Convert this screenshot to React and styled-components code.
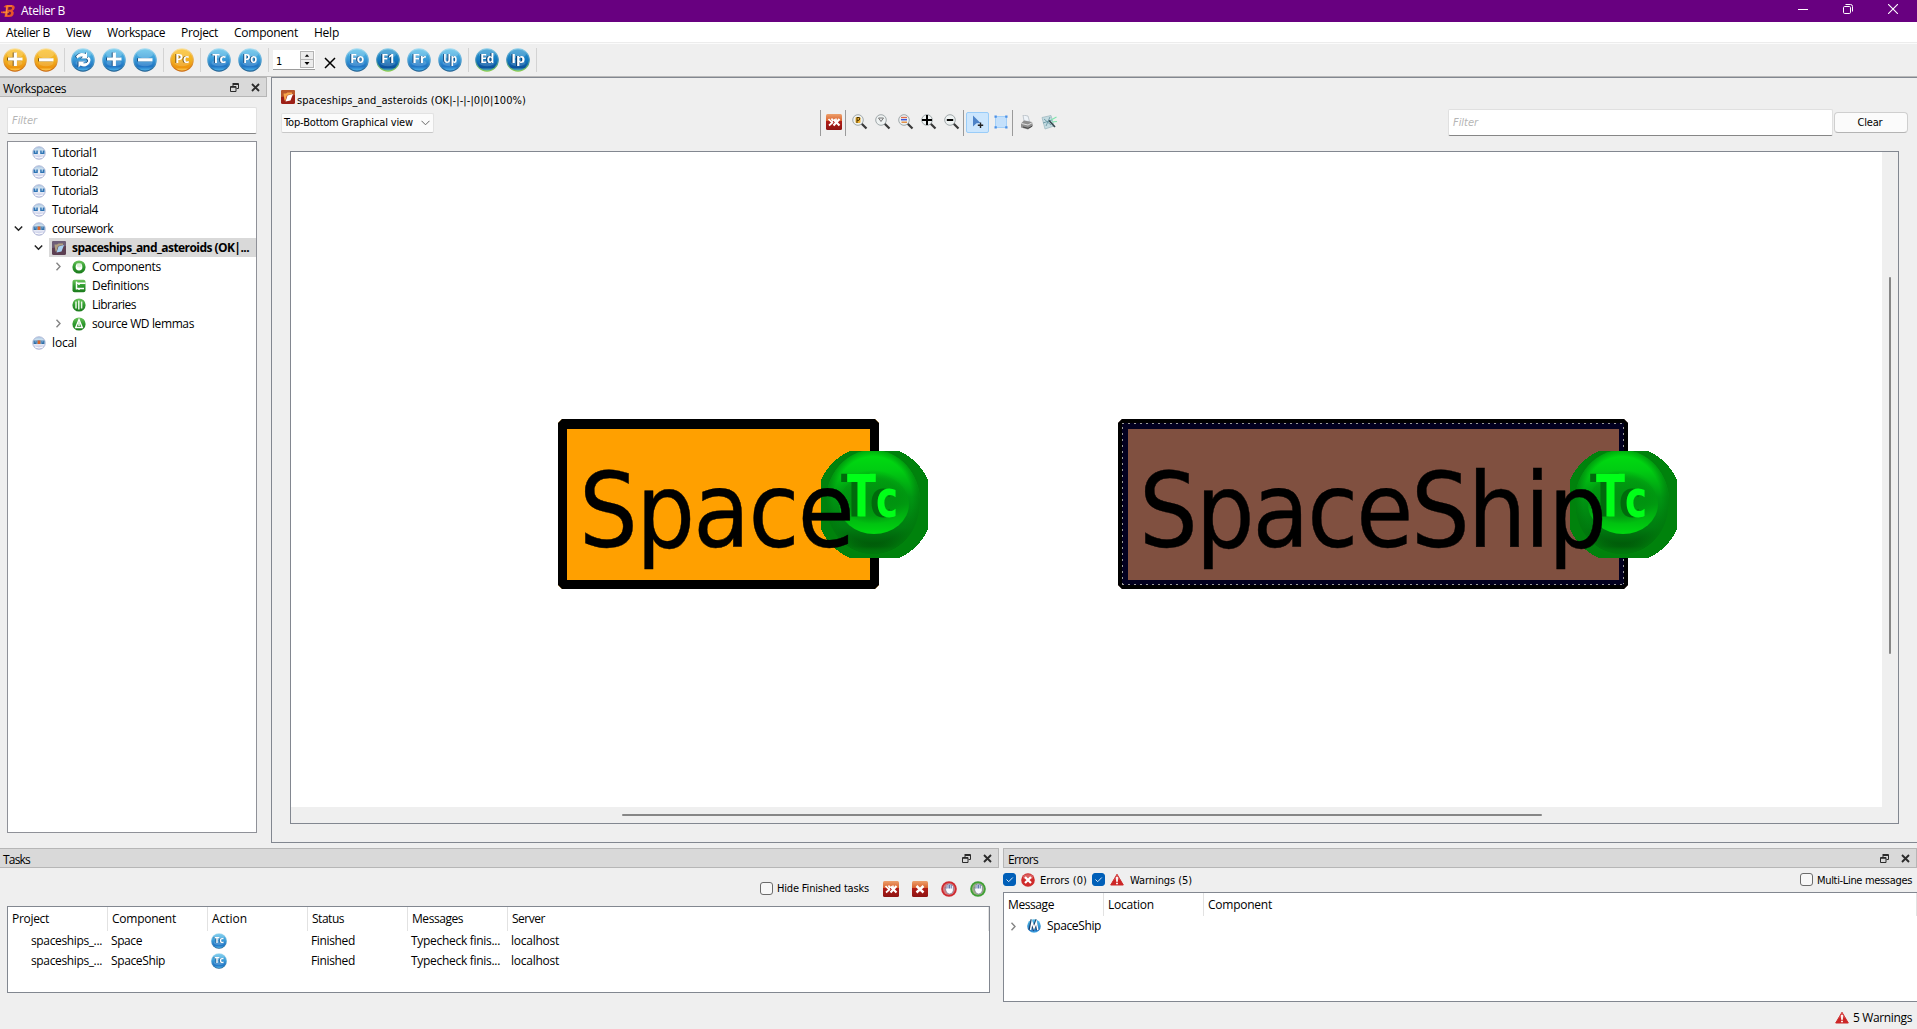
import React, { useLayoutEffect, useRef, useState } from 'react';
import styled, { createGlobalStyle, css } from 'styled-components';

const ui = '"Open Sans", "Noto Sans", sans-serif';
const tahoma = '"DejaVu Sans Condensed", "DejaVu Sans", sans-serif';

const Global = createGlobalStyle`
  * { box-sizing: border-box; }
  body { margin: 0; overflow: hidden; background: #efefef; }
  svg { display: block; flex: none; }
`;

/* ---------- text ---------- */
const TextSpan = styled.span`
  display: inline-block;
  flex: none;
  white-space: pre;
  font-family: ${(p) => (p.$tahoma ? tahoma : ui)};
  font-stretch: ${(p) => (p.$tahoma ? 'condensed' : 'normal')};
  font-size: ${(p) => p.$size || (p.$tahoma ? 11 : 12)}px;
  font-weight: ${(p) => (p.$bold ? 700 : 400)};
  font-style: ${(p) => (p.$italic ? 'italic' : 'normal')};
  line-height: ${(p) => p.$line || '16px'};
  color: ${(p) => p.$color || '#000'};
  -webkit-text-stroke: ${(p) => p.$stroke || 0}px #000;
`;

function Label({ width, children, ...rest }) {
  const ref = useRef(null);
  const [spacing, setSpacing] = useState(0);
  useLayoutEffect(() => {
    const natural = ref.current.getBoundingClientRect().width;
    if (width) setSpacing((width - natural) / String(children).length);
  }, [width, children]);
  return (
    <TextSpan ref={ref} style={{ letterSpacing: `${spacing}px` }} {...rest}>
      {children}
    </TextSpan>
  );
}

/* ---------- window chrome ---------- */
const Window = styled.div`
  width: 1917px;
  height: 1029px;
  display: flex;
  flex-direction: column;
  background: #efefef;
  overflow: hidden;
`;
const TitleBar = styled.header`
  height: 22px;
  flex: none;
  display: flex;
  align-items: center;
  justify-content: space-between;
  background: #680080;
  padding-left: 1px;
`;
const TitleLeft = styled.div`
  display: flex;
  align-items: center;
  gap: 5px;
  height: 22px;
  padding-bottom: 1px;
`;
const WindowButtons = styled.div`
  display: flex;
  align-items: center;
  gap: 35px;
  padding: 0 19px 4px 0;
`;
const MenuBar = styled.nav`
  height: 21px;
  flex: none;
  display: flex;
  align-items: center;
  gap: 16px;
  padding: 2px 0 0 6px;
  background: #fff;
  border-bottom: 1px solid #ececec;
`;
const Toolbar = styled.div`
  height: 34px;
  flex: none;
  display: flex;
  align-items: center;
  border-top: 1px solid #fbfbfb;
  border-bottom: 1px solid #b9b9b9;
`;
const ToolCell = styled.div`
  width: 31px;
  padding-left: 3px;
  flex: none;
`;
const ToolSep = styled.div`
  width: 6px;
  height: 24px;
  flex: none;
  background: linear-gradient(#d3d3d3, #d3d3d3) 2px 0 / 1px 100% no-repeat;
`;
const Spin = styled.div`
  width: 42px;
  height: 20px;
  margin: 0 0 0 1px;
  padding: 1px 1px 1px 3px;
  display: flex;
  align-items: center;
  justify-content: space-between;
  background: #fff;
  border-bottom: 1px solid #9c9c9c;
`;
const SpinValue = styled.div`
  padding-top: 2px;
`;
const SpinButtons = styled.div`
  display: grid;
  grid-template-rows: 8px 7px;
  width: 14px;
  height: 17px;
  border: 1px solid #b4b4b4;
  background: #ececec;
  > svg:first-child { border-bottom: 1px solid #b4b4b4; }
`;
const Cross = styled.div`
  width: 27px;
  padding: 5px 0 0 9px;
`;

/* ---------- docks ---------- */
const Upper = styled.div`
  height: 771px;
  flex: none;
  display: flex;
`;
const Lower = styled.div`
  height: 160px;
  flex: none;
  display: flex;
  gap: 4px;
`;
const Dock = styled.section`
  width: ${(p) => p.$width}px;
  flex: none;
  display: flex;
  flex-direction: column;
`;
const DockTitle = styled.div`
  height: 20px;
  flex: none;
  display: flex;
  align-items: center;
  justify-content: space-between;
  padding: 0 6px 0 ${(p) => p.$inset || 3}px;
  background: #d9d9d9;
  border: 1px solid #b6b6b6;
  border-left-width: ${(p) => (p.$inset ? 1 : 0)}px;
`;
const DockName = styled.div`
  padding-top: 2px;
`;
const DockButtons = styled.div`
  display: flex;
  align-items: center;
  gap: 12px;
`;
const FilterBox = styled.div`
  width: ${(p) => p.$width}px;
  height: 27px;
  flex: none;
  margin: ${(p) => p.$margin || 0};
  padding: 2px 4px;
  background: #fff;
  border: 1px solid #e0e0e0;
  border-bottom: 1px solid #868686;
  border-radius: 2px;
`;
const Tree = styled.div`
  width: 250px;
  height: 692px;
  margin: 7px 0 0 7px;
  padding-top: 1px;
  background: #fff;
  border: 1px solid #8f9198;
`;
const TreeRow = styled.div`
  height: 19px;
  display: flex;
  align-items: center;
  padding-left: ${(p) => p.$level * 20 + 4}px;
`;
const Twisty = styled.div`
  width: 17px;
  height: 16px;
  display: flex;
  align-items: center;
  padding-left: 2px;
  flex: none;
`;
const TreeItem = styled.div`
  height: 19px;
  flex: 1;
  display: flex;
  align-items: center;
  gap: 6px;
  padding-left: 3px;
  ${(p) => p.$selected && css`background: #d9d9d9;`}
`;

/* ---------- main view ---------- */
const Main = styled.main`
  width: 1646px;
  height: 766px;
  margin-left: 4px;
  flex: none;
  display: flex;
  flex-direction: column;
  border: 1px solid #828790;
  border-width: 1px 0 1px 1px;
`;
const PathRow = styled.div`
  display: flex;
  align-items: flex-start;
  gap: 2px;
  height: 20px;
  margin: 12px 0 0 9px;
`;
const ViewBar = styled.div`
  height: 28px;
  flex: none;
  display: flex;
  align-items: center;
  margin: -1px 0 0 9px;
  padding-bottom: 1px;
`;
const Combo = styled.div`
  width: 153px;
  height: 20px;
  padding: 1px 3px 0 2px;
  display: flex;
  align-items: center;
  justify-content: space-between;
  background: #fbfbfb;
  border: 1px solid #e2e2e2;
  border-bottom-color: #c8c8c8;
  border-radius: 2px;
`;
const ViewTools = styled.div`
  display: flex;
  align-items: center;
  margin-left: 386px;
  height: 26px;
`;
const ViewSep = styled.div`
  width: ${(p) => p.$width}px;
  height: 26px;
  flex: none;
  border-left: 1px solid #9a9a9a;
`;
const ViewTool = styled.div`
  width: 23px;
  height: 21px;
  margin-bottom: 1px;
  display: flex;
  align-items: center;
  justify-content: center;
  ${(p) => p.$active && css`
    background: #cce6fd;
    border: 1px solid #99ccf8;
    border-radius: 2px;
  `}
`;
const ViewFilter = styled.div`
  display: flex;
  align-items: center;
  gap: 1px;
  margin-left: 387px;
`;
const ClearButton = styled.button`
  width: 74px;
  height: 21px;
  padding: 1px 2px 0 0;
  border: 1px solid #cfcfcf;
  border-bottom-color: #b4b4b4;
  border-radius: 4px;
  background: #fbfbfb;
  display: flex;
  align-items: center;
  justify-content: center;
`;
const CanvasFrame = styled.div`
  width: 1609px;
  height: 673px;
  margin: 14px 0 0 18px;
  display: grid;
  grid-template-columns: 1fr 16px;
  grid-template-rows: 1fr 16px;
  border: 1px solid #828790;
`;
const Canvas = styled.div`
  position: relative;
  background: #fff;
`;
const VTrack = styled.div`
  padding: 125px 0 0 7px;
  &::after { content: ''; display: block; width: 2px; height: 377px; background: #868686; border-radius: 1px; }
`;
const HTrack = styled.div`
  padding: 7px 0 0 331px;
  &::after { content: ''; display: block; width: 920px; height: 2px; background: #868686; border-radius: 1px; }
`;
const Node = styled.div`
  position: absolute;
  left: ${(p) => p.$x}px;
  top: 267px;
  width: ${(p) => p.$width}px;
  height: 170px;
  border: 9px solid #000;
  border-top-width: 10px;
  border-left-width: ${(p) => p.$edge || 9}px;
  background: ${(p) => p.$fill};
  clip-path: polygon(4px 0, calc(100% - 4px) 0, 100% 4px, 100% calc(100% - 4px), calc(100% - 4px) 100%, 4px 100%, 0 calc(100% - 4px), 0 4px);
`;
const Selection = styled.div`
  position: absolute;
  left: ${(p) => p.$x}px;
  top: 271px;
  width: ${(p) => p.$width}px;
  height: 162px;
  border: 5px solid #02001f;
  border-width: 6px 5px 5px 6px;
  &::before {
    content: '';
    position: absolute;
    inset: -6px -5px -5px -6px;
    background:
      repeating-linear-gradient(90deg, #9a9a9a 0 2px, #02001f 2px 6px) 0 0 / 100% 1px no-repeat,
      repeating-linear-gradient(90deg, #9a9a9a 0 2px, #02001f 2px 6px) 0 100% / 100% 1px no-repeat,
      repeating-linear-gradient(0deg, #9a9a9a 0 2px, #02001f 2px 6px) 0 0 / 1px 100% no-repeat,
      repeating-linear-gradient(0deg, #9a9a9a 0 2px, #02001f 2px 6px) 100% 0 / 1px 100% no-repeat;
  }
`;
const Badge = styled.div`
  position: absolute;
  left: ${(p) => p.$x}px;
  top: 299px;
`;
const NodeName = styled.div`
  position: absolute;
  left: ${(p) => p.$x}px;
  top: 298px;
`;

/* ---------- tables ---------- */
const TaskTools = styled.div`
  height: 38px;
  flex: none;
  display: flex;
  align-items: center;
  justify-content: flex-end;
  padding: 3px 13px 0 0;
`;
const ErrorTools = styled.div`
  height: 24px;
  flex: none;
  display: flex;
  align-items: center;
  padding-bottom: 1px;
`;
const Check = styled.div`
  width: 13px;
  height: 13px;
  flex: none;
  margin: ${(p) => p.$margin || 0};
  border-radius: 3px;
  border: 1px solid ${(p) => (p.$on ? '#005fb8' : '#6b6b6b')};
  background: ${(p) => (p.$on ? '#005fb8' : '#f7f7f7')};
`;
const IconBox = styled.div`
  margin: ${(p) => p.$margin};
  flex: none;
`;
const Spacer = styled.div`
  flex: 1;
`;
const Table = styled.div`
  width: ${(p) => p.$width}px;
  height: ${(p) => p.$height}px;
  margin-left: ${(p) => p.$left || 0}px;
  background: #fff;
  border: 1px solid #828790;
  overflow: hidden;
`;
const HeadRow = styled.div`
  display: flex;
  height: ${(p) => p.$height || 24}px;
  justify-content: flex-start;
`;
const HeadCell = styled.div`
  width: ${(p) => p.$width || 100}px;
  flex: none;
  display: flex;
  align-items: center;
  padding-left: 4px;
  border-right: 1px solid #e2e2e2;
`;
const BodyRow = styled.div`
  display: flex;
  height: 20px;
  align-items: center;
`;
const Cell = styled.div`
  width: ${(p) => p.$width || 100}px;
  flex: none;
  padding-left: ${(p) => (p.$pad === undefined ? 3 : p.$pad)}px;
  display: flex;
  align-items: center;
`;
const StatusBar = styled.footer`
  flex: 1;
  display: flex;
  align-items: center;
  justify-content: flex-end;
  gap: 4px;
  padding: 0 5px 1px 0;
`;

/* ---------- icons ---------- */
const HiddenDefs = styled.svg`
  position: absolute;
`;
const EngravedText = styled.text`
  font-family: "Open Sans", sans-serif;
  font-weight: 700;
  font-size: 12.5px;
  fill: #fff;
  filter: drop-shadow(-0.8px 0.5px 0 ${(p) => p.$shade});
`;
const EngravedGroup = styled.g`
  filter: drop-shadow(-0.8px 0.8px 0 ${(p) => p.$shade});
`;
const BadgeText = styled.g`
  font-family: "DejaVu Sans", sans-serif;
  font-weight: 700;
  fill: #00ff18;
  filter: drop-shadow(-6px 0 0 #006a0c);
`;

function Defs() {
  return (
    <HiddenDefs width="0" height="0">
      <defs>
        <linearGradient id="blue" x1="0" y1="0" x2="0" y2="1">
          <stop offset="0" stopColor="#58bfe9" /><stop offset=".45" stopColor="#3a9cd8" />
          <stop offset=".8" stopColor="#1f74c4" /><stop offset="1" stopColor="#4fb4ea" />
        </linearGradient>
        <linearGradient id="deep" x1="0" y1="0" x2="0" y2="1">
          <stop offset="0" stopColor="#2f97d0" /><stop offset=".5" stopColor="#1279bf" />
          <stop offset=".85" stopColor="#0a4f9c" /><stop offset="1" stopColor="#5cc0c0" />
        </linearGradient>
        <linearGradient id="gold" x1="0" y1="0" x2="0" y2="1">
          <stop offset="0" stopColor="#fbbf24" /><stop offset=".5" stopColor="#f0b022" />
          <stop offset=".85" stopColor="#ee950c" /><stop offset="1" stopColor="#ffd05a" />
        </linearGradient>
        <linearGradient id="rimBlue" x1="0" y1="0" x2="0" y2="1">
          <stop offset="0" stopColor="#a9def2" /><stop offset=".5" stopColor="#57a8d8" /><stop offset="1" stopColor="#1d5c8e" />
        </linearGradient>
        <linearGradient id="rimDeep" x1="0" y1="0" x2="0" y2="1">
          <stop offset="0" stopColor="#8fd0ea" /><stop offset=".5" stopColor="#2d84b8" /><stop offset="1" stopColor="#8fd044" />
        </linearGradient>
        <linearGradient id="rimGold" x1="0" y1="0" x2="0" y2="1">
          <stop offset="0" stopColor="#fbe3a0" /><stop offset=".5" stopColor="#e9a73c" /><stop offset="1" stopColor="#c9660c" />
        </linearGradient>
        <linearGradient id="redBox" x1="0" y1="0" x2="0" y2="1">
          <stop offset="0" stopColor="#eda06b" /><stop offset=".42" stopColor="#d9622f" />
          <stop offset=".46" stopColor="#b01d17" /><stop offset="1" stopColor="#8e1413" />
        </linearGradient>
        <linearGradient id="greenDot" x1="0" y1="0" x2="0" y2="1">
          <stop offset="0" stopColor="#6cc45c" /><stop offset=".5" stopColor="#2e9a2e" /><stop offset="1" stopColor="#1c7a1c" />
        </linearGradient>
        <linearGradient id="face" x1="0" y1="0" x2="0" y2="1">
          <stop offset="0" stopColor="#a8c8e2" /><stop offset=".5" stopColor="#f2f5fa" /><stop offset="1" stopColor="#b8bce0" />
        </linearGradient>
        <linearGradient id="badgeBase" x1="0" y1="0" x2="0" y2="1">
          <stop offset="0" stopColor="#00e010" /><stop offset=".2" stopColor="#00cc12" />
          <stop offset=".45" stopColor="#009612" /><stop offset=".75" stopColor="#007c10" />
          <stop offset=".93" stopColor="#005608" /><stop offset="1" stopColor="#007a0c" />
        </linearGradient>
        <linearGradient id="badgeGlow" x1="0" y1="0" x2="0" y2="1">
          <stop offset="0" stopColor="#00960f" stopOpacity="0" /><stop offset=".5" stopColor="#009a10" />
          <stop offset="1" stopColor="#00d810" />
        </linearGradient>
        <radialGradient id="badgeCore">
          <stop offset="0" stopColor="#00900f" stopOpacity=".8" /><stop offset=".7" stopColor="#00900f" stopOpacity=".6" />
          <stop offset="1" stopColor="#00900f" stopOpacity="0" />
        </radialGradient>
        <radialGradient id="badgeEdge" cx=".5" cy=".48" r=".52">
          <stop offset=".8" stopColor="#007a0c" stopOpacity="0" /><stop offset="1" stopColor="#007a0c" stopOpacity=".9" />
        </radialGradient>
      </defs>
    </HiddenDefs>
  );
}

const shades = { blue: '#1c4f80', deep: '#0b3766', gold: '#7a5410' };

function Ball({ tone = 'blue', text, size = 24, children }) {
  const rim = { blue: 'rimBlue', deep: 'rimDeep', gold: 'rimGold' }[tone];
  return (
    <svg width={size} height={size} viewBox="0 0 24 24">
      <circle cx="12" cy="12" r="11.8" fill={`url(#${rim})`} />
      <circle cx="12" cy="12" r="10.6" fill={`url(#${tone})`} />
      <ellipse cx="12" cy="6" rx="8" ry="4.4" fill="#fff" opacity=".2" />
      <ellipse cx="12" cy="15" rx="7.5" ry="3.2" fill="#fff" opacity=".16" />
      {text && (
        <EngravedText $shade={shades[tone]} x="5.2" y="15" textLength="14" lengthAdjust="spacingAndGlyphs">{text}</EngravedText>
      )}
      {children && <EngravedGroup $shade={shades[tone]}>{children}</EngravedGroup>}
    </svg>
  );
}
const Plus = () => <path d="M12.300 4.500V18M5 11H19.500" stroke="#fff" strokeWidth="3.200" fill="none" />;
const Minus = () => <path d="M5 11.800H19.500" stroke="#fff" strokeWidth="3.200" fill="none" />;
const Refresh = () => (
  <g fill="#fff">
    <path d="M5 8.500Q9 3 14.500 6L16 4V10.500H10L12 8.800Q8.500 7.500 6.500 10.500Z" />
    <path d="M19 14Q15.500 20.500 9.500 17.500L7.500 19.500V13.500H14L11.800 15Q15 16.200 17 13.500Q17.500 11.500 15.500 10.800L17.500 8.800Q20.500 10.500 19 14Z" />
  </g>
);

const Logo = () => (
  <svg width="15" height="16" viewBox="0 0 15 16">
    <path d="M5 2H11Q14.500 2.500 13.500 5.500Q13 7.200 11.500 7.700Q13.500 9 12.500 11.500Q11.500 14 8 14H3.500L4 10.500L0 10V8.500H4.500L5 4.500L2.500 4Z" fill="#e8542c" />
    <path d="M7.500 4H10Q11.500 4.200 11 5.500Q10.500 6.700 9 6.700H7ZM7 8.700H9Q10.800 9 10 10.700Q9.300 12 7.800 12H6.500Z" fill="#6e1450" />
    <path d="M6 3L5 13M2 9.200H8M6 3H11" stroke="#ff9a3c" strokeWidth=".9" fill="none" />
  </svg>
);
const Restore = () => (
  <svg width="9" height="9" viewBox="0 0 9 9">
    <path d="M3 .5H8.500V5.500H6.500M3 1.500H8.500M3 0V3" stroke="#2b2b2b" fill="none" />
    <path d="M.5 3.500H6V8.500H.5ZM.5 4.300H6" stroke="#2b2b2b" fill="none" />
  </svg>
);
const Close = () => (
  <svg width="9" height="9" viewBox="0 0 9 9"><path d="M1 1L8 8M8 1L1 8" stroke="#2b2b2b" strokeWidth="1.9" /></svg>
);
const Chevron = ({ open }) => (
  <svg width="9" height="9" viewBox="0 0 9 9">
    {open ? <path d="M.8 2.500L4.500 6.200L8.200 2.500" stroke="#222" strokeWidth="1.5" fill="none" />
      : <path d="M2.500 .8L6 4.500L2.500 8.200" stroke="#858585" strokeWidth="1.4" fill="none" />}
  </svg>
);
const FaceIcon = ({ on }) => (
  <svg width="14" height="14" viewBox="0 0 14 14">
    <circle cx="7" cy="7" r="6.300" fill="url(#face)" stroke="#aab0d2" strokeWidth=".8" />
    {on ? (
      <g><path d="M1.500 4.500H12.500V8H1.500Z" fill="#2f6ea8" /><rect x="5.400" y="4.500" width="3.200" height="3.500" fill="#d8642a" />
        <path d="M3.200 4.500V6.500M10.800 4.500V6.500M5 4.500V8M9 4.500V8" stroke="#a9cbe6" strokeWidth=".7" /></g>
    ) : (
      <g fill="#2e74b4"><path d="M1.500 4.500H5.800V8H1.500ZM8.200 4.500H12.500V8H8.200Z" />
        <path d="M3.800 4V6.700M10.200 4V6.700" stroke="#d6e6f4" strokeWidth="1" /></g>
    )}
    <path d="M3 11Q7 13 11 11" stroke="#fff" fill="none" />
  </svg>
);
const FolderIcon = ({ muted }) => (
  <svg width="14" height="14" viewBox="0 0 14 14">
    <rect width="14" height="14" rx="1.500" fill={muted ? '#5c3f52' : '#9c1f16'} />
    <path d="M0 1.500Q0 0 1.500 0H12.500Q14 0 14 1.500V5L0 7Z" fill={muted ? '#6e5f78' : '#b8562a'} />
    <path d="M2.500 3.500H5L6.500 2.500H11V4L6 5L4.500 10.500H3.500Z" fill={muted ? '#b0a080' : '#f7a64a'} />
    <path d="M6.500 5.500L12 4L9.500 10.500L4.500 11.500Z" fill={muted ? '#a8d0f0' : '#fff'} />
  </svg>
);
const GreenIcon = ({ kind }) => (
  <svg width="14" height="14" viewBox="0 0 14 14">
    {kind === 'definitions' ? <rect x=".5" y=".8" width="13" height="12.500" rx="2" fill="url(#greenDot)" />
      : <circle cx="7" cy="7" r="6.600" fill="url(#greenDot)" />}
    {kind === 'components' && <g><circle cx="7" cy="7" r="3.400" fill="#fff" /><path d="M4.500 3.400H9.500V6.500Q7 8.500 5 6.500Z" fill="#d9f2d4" /></g>}
    {kind === 'definitions' && <path d="M4.500 2.500V10.500M4.500 4.200H13.500M4.500 9.500H12M7 4.200V6M7 9.500V11" stroke="#fff" strokeWidth="1.500" fill="none" />}
    {kind === 'libraries' && <path d="M4 3.500V10.500M6.800 2.500V11.500M9.600 3.500V10.500" stroke="#eaf8e6" strokeWidth="1.500" />}
    {kind === 'lemmas' && <path d="M7 2.500L10.300 10.500H3.700ZM7 5.500V9" stroke="#fff" strokeWidth="1.400" fill="none" />}
  </svg>
);
const KillIcon = ({ double }) => (
  <svg width="16" height="16" viewBox="0 0 16 16">
    <rect width="16" height="16" rx="1.500" fill="url(#redBox)" />
    {double ? (
      <g stroke="#fff" fill="none">
        <path d="M7.500 5.500L13.500 11.500M13.500 5L7.500 11.500" strokeWidth="2.200" />
        <path d="M2.500 5L6 8.500M7 8L3 11.500M5.500 4.500L7 7M10 4.500V7" strokeWidth="1.700" />
      </g>
    ) : <path d="M4.500 5L11.500 11.500M11.500 5L4.500 11.500" stroke="#fff" strokeWidth="2.400" />}
  </svg>
);
const HandIcon = ({ color }) => (
  <svg width="16" height="16" viewBox="0 0 16 16">
    <circle cx="8" cy="8" r="7.800" fill={color} />
    <circle cx="8" cy="8" r="6" fill="#d9b8b8" opacity=".6" />
    <path d="M4 6.500L5.300 7.500V4.500Q6 3 7 3.500Q8.500 2.200 9.500 3.500Q11 3 11.300 4.500L12.300 5.500V9.500Q11.800 13 8.500 13Q6 13 5 10Z" fill="#fbfbff" stroke="#666c8c" strokeWidth=".6" />
    <path d="M7 4V7.500M8.600 3.500V7.500M10.200 4V7.500" stroke="#3f5b9c" strokeWidth=".9" />
  </svg>
);
const ErrorIcon = () => (
  <svg width="14" height="14" viewBox="0 0 14 14">
    <circle cx="7" cy="7" r="6.800" fill="#cf2b2b" /><ellipse cx="7" cy="4" rx="5" ry="2.800" fill="#fff" opacity=".25" />
    <path d="M4 4L10 10M10 4L4 10" stroke="#fff" strokeWidth="2.200" />
  </svg>
);
const WarnIcon = () => (
  <svg width="14" height="14" viewBox="0 0 14 14">
    <path d="M7 1.300L13.300 12H.7Z" fill="#cc2626" stroke="#cc2626" strokeLinejoin="round" />
    <path d="M7 1.500L10 6.500H4Z" fill="#e88080" opacity=".6" />
    <path d="M7 4V8.700M7 9.800V11.300" stroke="#fff" strokeWidth="1.800" />
  </svg>
);
const MachineIcon = () => (
  <svg width="14" height="14" viewBox="0 0 14 14">
    <circle cx="7" cy="7" r="6.800" fill="url(#blue)" />
    <path d="M2.800 11L4.300 3.500L6.500 9L8.700 3.500L10.300 11" stroke="#1c3f66" strokeWidth="2.600" fill="none" />
    <path d="M3.500 11L5 3.200L7 9L9.300 3.200L10.800 11" stroke="#fff" strokeWidth="1.500" fill="none" />
  </svg>
);
const Lens = ({ kind }) => (
  <svg width="16" height="16" viewBox="0 0 16 16">
    <path d="M9.500 9.500L14.500 14.500" stroke="#3a3a3a" strokeWidth="2.200" />
    <circle cx="6" cy="6" r="5.300" fill="#eef2f2" stroke="#a0a8aa" />
    {kind === 'project' && <g><rect x="3.500" y="3" width="5" height="6" rx="1" fill="#f0b436" /><path d="M5 9V3.500H7.300Q8.500 5 7 6.300H5" stroke="#4b3200" fill="none" /></g>}
    {kind === 'fit' && <path d="M3.500 4H8.500L6 7.500Z" fill="#e8ebec" stroke="#777" />}
    {kind === 'select' && <g><path d="M3 3.500H9" stroke="#e06a4c" strokeWidth="1.300" /><path d="M3 5.700H9" stroke="#4057d8" strokeWidth="1.500" /><path d="M3.500 8.200H9" stroke="#e0812c" strokeWidth="1.300" /></g>}
    {kind === 'in' && <path d="M6 1V11M1 6H11" stroke="#000" strokeWidth="2" />}
    {kind === 'out' && <path d="M2.800 6H9.200" stroke="#000" strokeWidth="2" />}
  </svg>
);
const Pointer = () => (
  <svg width="14" height="14" viewBox="0 0 14 14">
    <path d="M2 .5L9.500 8L5.500 8.200L2 11.500Z" fill="#4e83c8" />
    <path d="M9.500 7.500V13M6.800 10.200H12.200" stroke="#222" strokeWidth="1.400" />
  </svg>
);
const Marquee = () => (
  <svg width="14" height="14" viewBox="0 0 14 14">
    <rect x="1.500" y="1.500" width="11" height="11" fill="#c4e0fb" stroke="#a3cff7" />
    <path d="M.5 .5H2.800V2.800H.5ZM11.200 .5H13.500V2.800H11.200ZM.5 11.200H2.800V13.500H.5ZM11.200 11.200H13.500V13.500H11.200Z" fill="#4a90e8" />
  </svg>
);
const Printer = () => (
  <svg width="14" height="15" viewBox="0 0 14 15">
    <path d="M3 0L8 1L9.500 6.500L4 6Z" fill="#eef3f8" stroke="#a5adb5" strokeWidth=".6" />
    <path d="M1 8.500L4 5.500L12 7L13 11L8 14.500L1 12.500Z" fill="#8e8e8e" />
    <path d="M1.500 8.500L8 10L12.500 7.500" stroke="#e2e2e2" fill="none" /><path d="M3 12L8 13.300L12 11.300" stroke="#444" fill="none" />
  </svg>
);
const Snapshot = () => (
  <svg width="17" height="16" viewBox="0 0 17 16">
    <path d="M1 3.500L10 1.500L13 12L4 15Z" fill="#c4dbe1" stroke="#9ab4bd" strokeWidth=".7" />
    <path d="M3 5L10 11M5 12L9 3M2 9L11 6" stroke="#6a97a4" strokeWidth=".9" />
    <path d="M8 6.500L14 13" stroke="#35474d" strokeWidth="1.600" /><path d="M10 6L15.500 3M11 8L16 7.500" stroke="#7fe6ae" strokeWidth="1.200" />
  </svg>
);
function TcBadge() {
  return (
    <svg width="107" height="107" viewBox="0 0 107 107">
      <circle cx="53.5" cy="53.5" r="59" fill="#00820c" shapeRendering="crispEdges" />
      <ellipse cx="52" cy="51" rx="47" ry="52" fill="url(#badgeBase)" />
      <ellipse cx="52" cy="51" rx="47" ry="52" fill="url(#badgeEdge)" />
      <ellipse cx="53" cy="53" rx="35" ry="30" fill="url(#badgeGlow)" />
      <ellipse cx="52" cy="46" rx="36" ry="27" fill="url(#badgeCore)" />
      <BadgeText>
        <text x="26" y="66" fontSize="58" textLength="29" lengthAdjust="spacingAndGlyphs">T</text>
        <text x="55" y="65.500" fontSize="52" textLength="22" lengthAdjust="spacingAndGlyphs">c</text>
      </BadgeText>
    </svg>
  );
}

/* ---------- data ---------- */
const menus = [['Atelier B', 44], ['View', 25], ['Workspace', 58], ['Project', 37], ['Component', 64], ['Help', 25]];
const treeRows = [
  { level: 0, icon: <FaceIcon />, text: 'Tutorial1', w: 46 },
  { level: 0, icon: <FaceIcon />, text: 'Tutorial2', w: 46 },
  { level: 0, icon: <FaceIcon />, text: 'Tutorial3', w: 46 },
  { level: 0, icon: <FaceIcon />, text: 'Tutorial4', w: 46 },
  { level: 0, icon: <FaceIcon on />, text: 'coursework', w: 61, open: true },
  { level: 1, icon: <FolderIcon muted />, text: 'spaceships_and_asteroids (OK|...', w: 177, open: true, selected: true },
  { level: 2, icon: <GreenIcon kind="components" />, text: 'Components', w: 69, open: false },
  { level: 2, icon: <GreenIcon kind="definitions" />, text: 'Definitions', w: 57 },
  { level: 2, icon: <GreenIcon kind="libraries" />, text: 'Libraries', w: 44 },
  { level: 2, icon: <GreenIcon kind="lemmas" />, text: 'source WD lemmas', w: 102, open: false },
  { level: 0, icon: <FaceIcon on />, text: 'local', w: 25 },
];
const taskHeads = [['Project', 37], ['Component', 64], ['Action', 35], ['Status', 32], ['Messages', 51], ['Server', 33]];
const tasks = [['Space', 31], ['SpaceShip', 54]];

function DockHeader({ title, width, inset }) {
  return (
    <DockTitle $inset={inset}>
      <DockName><Label width={width}>{title}</Label></DockName>
      <DockButtons><Restore /><Close /></DockButtons>
    </DockTitle>
  );
}

function CheckedBox({ margin }) {
  return (
    <Check $on $margin={margin}>
      <svg width="11" height="11" viewBox="0 0 11 11"><path d="M2.500 5.500L4.700 7.700L8.800 3.500" stroke="#dcebf8" fill="none" /></svg>
    </Check>
  );
}

export default function App() {
  return (
    <Window>
      <Global />
      <Defs />
      <TitleBar>
        <TitleLeft><Logo /><Label width={44} $color="#fff">Atelier B</Label></TitleLeft>
        <WindowButtons>
          <svg width="10" height="10" viewBox="0 0 10 10"><path d="M0 5.500H10" stroke="#fff" /></svg>
          <svg width="10" height="10" viewBox="0 0 10 10">
            <rect x=".5" y="2.500" width="7" height="7" rx="1.200" stroke="#fff" fill="none" /><path d="M2.500 .5H7.500Q9.500 .5 9.500 2.500V7.500" stroke="#fff" fill="none" />
          </svg>
          <svg width="10" height="10" viewBox="0 0 10 10"><path d="M0 0L10 10M10 0L0 10" stroke="#fff" strokeWidth="1.100" /></svg>
        </WindowButtons>
      </TitleBar>
      <MenuBar>{menus.map(([t, w]) => <Label key={t} width={w}>{t}</Label>)}</MenuBar>
      <Toolbar>
        <ToolCell><Ball tone="gold"><Plus /></Ball></ToolCell>
        <ToolCell><Ball tone="gold"><Minus /></Ball></ToolCell>
        <ToolSep />
        <ToolCell><Ball><Refresh /></Ball></ToolCell>
        <ToolCell><Ball><Plus /></Ball></ToolCell>
        <ToolCell><Ball><Minus /></Ball></ToolCell>
        <ToolSep />
        <ToolCell><Ball tone="gold" text="Pc" /></ToolCell>
        <ToolSep />
        <ToolCell><Ball text="Tc" /></ToolCell>
        <ToolCell><Ball text="Po" /></ToolCell>
        <ToolSep />
        <Spin>
          <SpinValue><Label $tahoma>1</Label></SpinValue>
          <SpinButtons>
            <svg width="12" height="8" viewBox="0 0 12 8"><path d="M3.500 5.500H8.500L6 2.500Z" /></svg>
            <svg width="12" height="7" viewBox="0 0 12 7"><path d="M3.500 2H8.500L6 5Z" /></svg>
          </SpinButtons>
        </Spin>
        <Cross><svg width="12" height="12" viewBox="0 0 12 12"><path d="M1 1L11 11M11 1L1 11" stroke="#000" strokeWidth="1.500" /></svg></Cross>
        <ToolCell><Ball text="Fo" /></ToolCell>
        <ToolCell><Ball tone="deep" text="F1" /></ToolCell>
        <ToolCell><Ball text="Fr" /></ToolCell>
        <ToolCell><Ball text="Up" /></ToolCell>
        <ToolSep />
        <ToolCell><Ball tone="deep" text="Ed" /></ToolCell>
        <ToolCell><Ball tone="deep" text="Ip" /></ToolCell>
        <ToolSep />
      </Toolbar>

      <Upper>
        <Dock $width={267}>
          <DockHeader title="Workspaces" width={63} />
          <FilterBox $width={250} $margin="10px 0 0 7px"><Label $tahoma $italic $color="#b5b5b5" width={25}>Filter</Label></FilterBox>
          <Tree>
            {treeRows.map((r) => (
              <TreeRow key={r.text} $level={r.level}>
                <Twisty>{r.open !== undefined && <Chevron open={r.open} />}</Twisty>
                <TreeItem $selected={r.selected}>
                  {r.icon}
                  <Label width={r.w} $bold={r.selected}>{r.text}</Label>
                </TreeItem>
              </TreeRow>
            ))}
          </Tree>
        </Dock>
        <Main>
          <PathRow>
            <FolderIcon />
            <Label $tahoma $line="22px" width={229}>spaceships_and_asteroids (OK|-|-|-|0|0|100%)</Label>
          </PathRow>
          <ViewBar>
            <Combo>
              <Label $tahoma width={129}>Top-Bottom Graphical view</Label>
              <svg width="9" height="6" viewBox="0 0 9 6"><path d="M.5 .8L4.500 4.800L8.500 .8" stroke="#666" fill="none" /></svg>
            </Combo>
            <ViewTools>
              <ViewSep $width={2} />
              <ViewTool><KillIcon double /></ViewTool>
              <ViewSep $width={3} />
              <ViewTool><Lens kind="project" /></ViewTool>
              <ViewTool><Lens kind="fit" /></ViewTool>
              <ViewTool><Lens kind="select" /></ViewTool>
              <ViewTool><Lens kind="in" /></ViewTool>
              <ViewTool><Lens kind="out" /></ViewTool>
              <ViewSep $width={3} />
              <ViewTool $active><Pointer /></ViewTool>
              <ViewTool><Marquee /></ViewTool>
              <ViewSep $width={3} />
              <ViewTool><Printer /></ViewTool>
              <ViewTool><Snapshot /></ViewTool>
            </ViewTools>
            <ViewFilter>
              <FilterBox $width={385}><Label $tahoma $italic $color="#b5b5b5" width={25}>Filter</Label></FilterBox>
              <ClearButton><Label $tahoma width={25}>Clear</Label></ClearButton>
            </ViewFilter>
          </ViewBar>
          <CanvasFrame>
            <Canvas>
              <Node $x={267} $width={321} $fill="#ffa000" />
              <Node $x={827} $width={510} $edge={10} $fill="#805040" />
              <Selection $x={831} $width={502} />
              <Badge $x={530}><TcBadge /></Badge>
              <Badge $x={1279}><TcBadge /></Badge>
              <NodeName $x={288}><Label $tahoma $size={103} $stroke={0.4} $line="122px" width={274}>Space</Label></NodeName>
              <NodeName $x={848}><Label $tahoma $size={103} $stroke={0.4} $line="122px" width={466}>SpaceShip</Label></NodeName>
            </Canvas>
            <VTrack />
            <HTrack />
          </CanvasFrame>
        </Main>
      </Upper>

      <Lower>
        <Dock $width={999}>
          <DockHeader title="Tasks" width={27} />
          <TaskTools>
            <Check $margin="0 4px 0 0" />
            <Label $tahoma width={92}>Hide Finished tasks</Label>
            <IconBox $margin="0 0 0 14px"><KillIcon double /></IconBox>
            <IconBox $margin="0 0 0 13px"><KillIcon /></IconBox>
            <IconBox $margin="0 0 0 13px"><HandIcon color="#cf2a30" /></IconBox>
            <IconBox $margin="0 0 0 13px"><HandIcon color="#3fa035" /></IconBox>
          </TaskTools>
          <Table $width={983} $height={87} $left={7}>
            <HeadRow>
              {taskHeads.map(([t, w], i) => (
                <HeadCell key={t} $width={i === 5 ? 481 : 100}><Label width={w}>{t}</Label></HeadCell>
              ))}
            </HeadRow>
            {tasks.map(([name, w]) => (
              <BodyRow key={name}>
                <Cell $pad={23}><Label width={71}>spaceships_...</Label></Cell>
                <Cell><Label width={w}>{name}</Label></Cell>
                <Cell><Ball text="Tc" size={16} /></Cell>
                <Cell><Label width={44}>Finished</Label></Cell>
                <Cell><Label width={89}>Typecheck finis...</Label></Cell>
                <Cell><Label width={48}>localhost</Label></Cell>
              </BodyRow>
            ))}
          </Table>
        </Dock>
        <Dock $width={914}>
          <DockHeader title="Errors" width={30} inset={4} />
          <ErrorTools>
            <CheckedBox margin="0 5px 1px 0" />
            <ErrorIcon />
            <IconBox $margin="0 5px 0 5px"><Label $tahoma width={47}>Errors (0)</Label></IconBox>
            <CheckedBox margin="0 5px 1px 0" />
            <WarnIcon />
            <IconBox $margin="0 0 0 6px"><Label $tahoma width={62}>Warnings (5)</Label></IconBox>
            <Spacer />
            <Check $margin="0 4px 1px 0" />
            <IconBox $margin="0 5px 0 0"><Label $tahoma width={95}>Multi-Line messages</Label></IconBox>
          </ErrorTools>
          <Table $width={915} $height={110}>
            <HeadRow $height={23}>
              <HeadCell><Label width={46}>Message</Label></HeadCell>
              <HeadCell><Label width={46}>Location</Label></HeadCell>
              <HeadCell $width={713}><Label width={64}>Component</Label></HeadCell>
            </HeadRow>
            <BodyRow>
              <Cell $width={23} $pad={5}><Chevron /></Cell>
              <MachineIcon />
              <Cell $pad={6}><Label width={54}>SpaceShip</Label></Cell>
            </BodyRow>
          </Table>
        </Dock>
      </Lower>
      <StatusBar><WarnIcon /><Label width={59}>5 Warnings</Label></StatusBar>
    </Window>
  );
}
